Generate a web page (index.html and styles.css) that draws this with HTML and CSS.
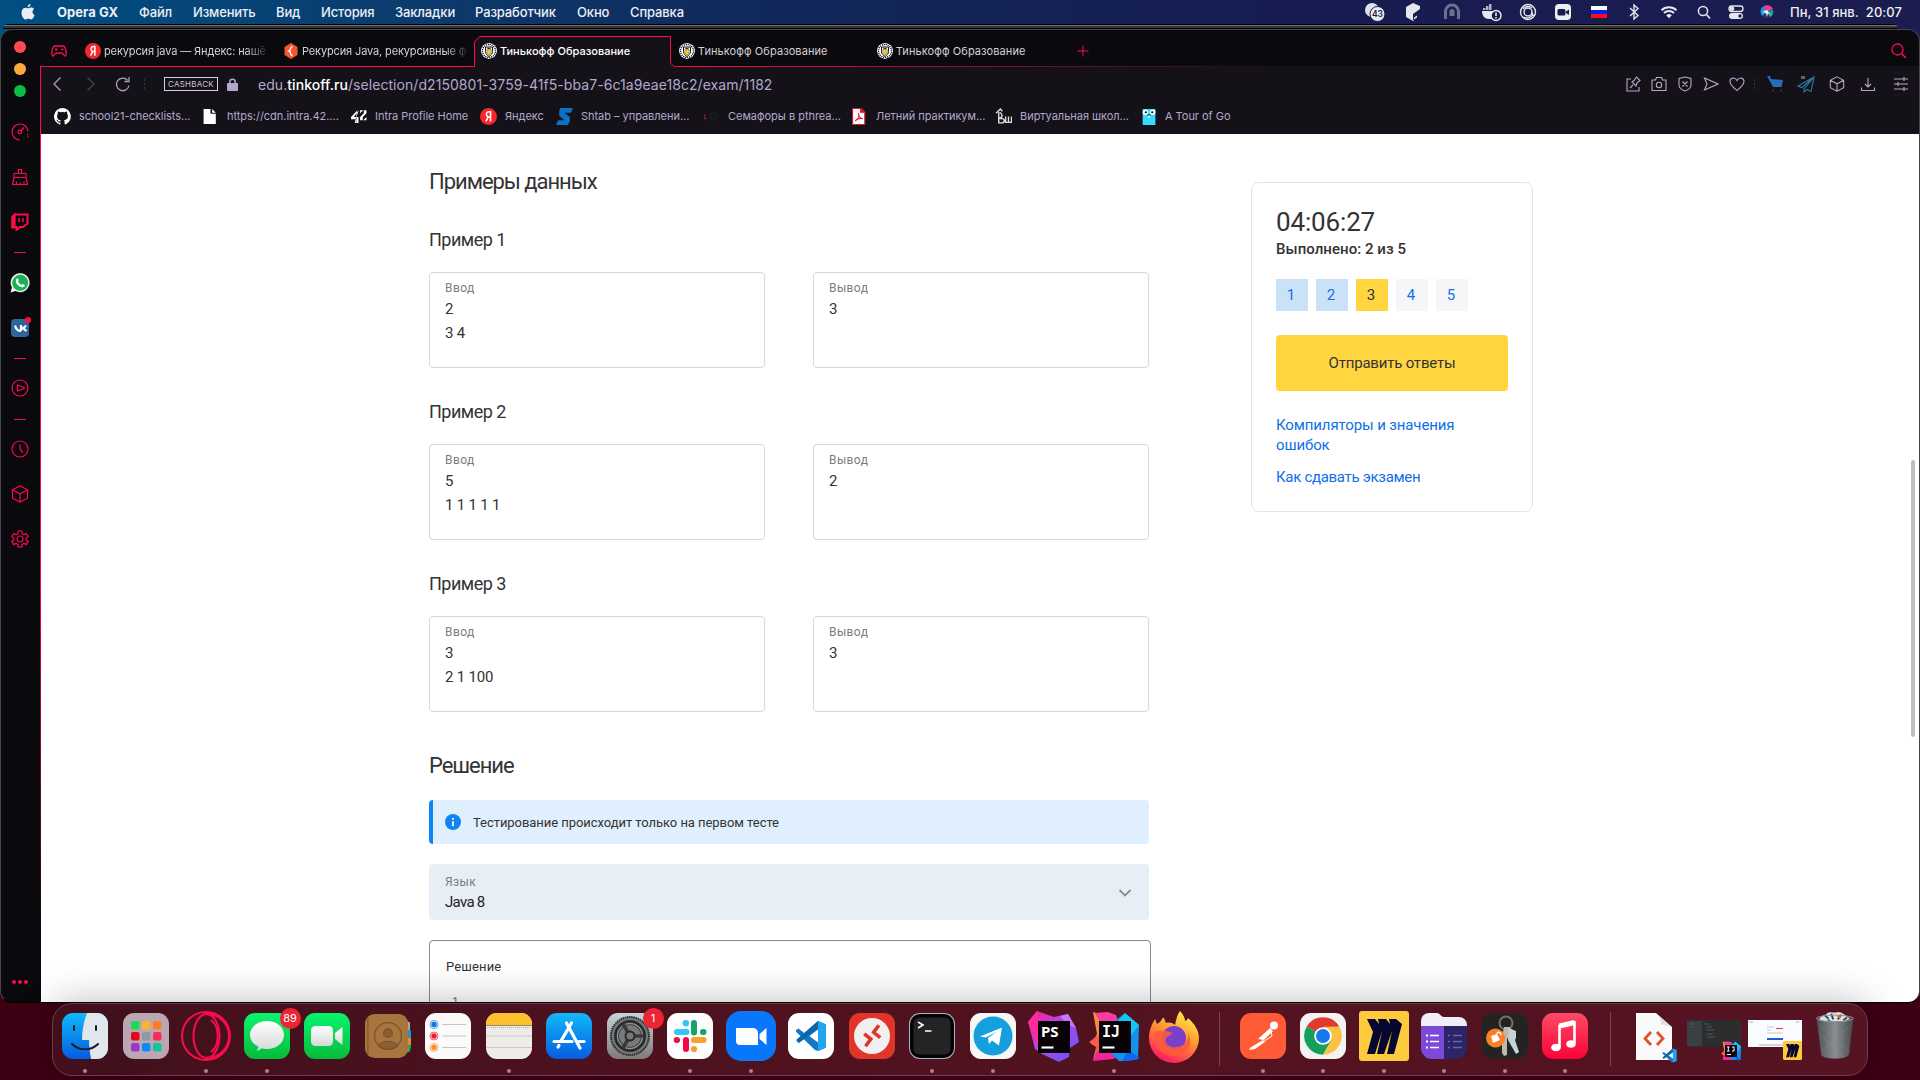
FILE: index.html
```html
<!DOCTYPE html>
<html lang="ru">
<head>
<meta charset="utf-8">
<title>Тинькофф Образование</title>
<link rel="stylesheet" href="styles.css">
</head>
<body>
<svg class="defs" width="0" height="0">
  <defs>
    <symbol id="crest" viewBox="0 0 16 16"><path d="M8 0l3 .8 2.500 1.400L15.500 5l.5 3-.8 3-2 3L8 16l-5.200-2L.8 11 0 8l.5-3 2-2.800L5 .8z" fill="#fff"/><path d="M8 1.500a6.500 6.500 0 100 13 6.500 6.500 0 000-13z" fill="none" stroke="#111" stroke-width="1.300" stroke-dasharray="1.200 .8"/><path d="M4.500 4h7v4.500c0 2.500-2 4-3.500 5-1.500-1-3.500-2.500-3.500-5z" fill="#fff" stroke="#111" stroke-width="1"/><path d="M5.800 6.500h4.400V9c0 1.600-1.200 2.600-2.200 3.400C7 11.600 5.800 10.600 5.800 9z" fill="#fbc926" stroke="#333" stroke-width=".4"/><path d="M5.800 4.800h4.400l-1 1.300H6.800z" fill="#333"/></symbol>
    <symbol id="ya" viewBox="0 0 16 16"><circle cx="8" cy="8" r="8" fill="#f8262c"/><path d="M9.900 12.700V3.600H8.500C6.900 3.600 6 4.500 6 5.900c0 1.200.6 1.900 1.700 2.600L5.500 12.700M9.900 8.600H8" fill="none" stroke="#fff" stroke-width="1.500"/></symbol>
    <symbol id="cube" viewBox="0 0 18 18"><path d="M9 1l7.500 3.800v8.400L9 17l-7.500-3.800V4.800zM1.500 4.800L9 8.800l7.500-4M9 8.800V17" fill="none" stroke="currentColor" stroke-width="1.200"/></symbol>
    <symbol id="vscode" viewBox="0 0 32 32"><path d="M23 1L9.500 13.200 3.600 8.600 1 9.900v1.800L20 30l3 1 8-3.500V4.500z" fill="#1479c4"/><path d="M23 1v30l8-3.500V4.500z" fill="#22a4ee"/><path d="M1 20l2.600 3.300L23 8.500V1z" fill="#0a66ad"/><path d="M23 9.500v13L14.300 16z" fill="#fff"/></symbol>
    <symbol id="miro" viewBox="0 0 50 50"><rect width="50" height="50" rx="3" fill="#fdc93d"/><path d="M8 8h8l4 5-1-5h8l4 5-1-5h7l6 5-8 30h-7l5-23-8 23h-7l5-23-7 23H8l6-22z" fill="#06062f"/></symbol>
    <linearGradient id="gBlue" x1="0" y1="0" x2="0" y2="1"><stop offset="0" stop-color="#10b9fb"/><stop offset="1" stop-color="#065ce0"/></linearGradient>
    <linearGradient id="gGreen" x1="0" y1="0" x2="0" y2="1"><stop offset="0" stop-color="#08f56f"/><stop offset="1" stop-color="#06bb3a"/></linearGradient>
    <linearGradient id="gWhite" x1="0" y1="0" x2="0" y2="1"><stop offset="0" stop-color="#fff"/><stop offset="1" stop-color="#d5d9d5"/></linearGradient>
    <linearGradient id="gGray" x1="0" y1="0" x2="0" y2="1"><stop offset="0" stop-color="#c6d4da"/><stop offset="1" stop-color="#7f7b79"/></linearGradient>
    <linearGradient id="gPs" x1="0" y1="0" x2="1" y2="1"><stop offset="0" stop-color="#ff188d"/><stop offset=".45" stop-color="#b349e8"/><stop offset="1" stop-color="#5b55fb"/></linearGradient>
    <linearGradient id="gFox" x1=".8" y1="0" x2=".3" y2="1"><stop offset="0" stop-color="#fff14f"/><stop offset=".45" stop-color="#ff9a2c"/><stop offset="1" stop-color="#ff1462"/></linearGradient>
    <linearGradient id="gMusic" x1="0" y1="0" x2="0" y2="1"><stop offset="0" stop-color="#fd4b66"/><stop offset="1" stop-color="#fa0436"/></linearGradient>
    <linearGradient id="gBin" x1="0" y1="0" x2="1" y2="0"><stop offset="0" stop-color="#4d5153"/><stop offset=".5" stop-color="#8a8e90"/><stop offset="1" stop-color="#44484a"/></linearGradient>
    <symbol id="idea" viewBox="0 0 50 50"><path d="M4 1l14 4 12 6-10 30L2 33l6-10z" fill="#fb8b34"/><path d="M6 2l13-1 8 3 8 26-15-2z" fill="#f93d9d"/><path d="M0 31l12-9 14 10-14 10-8 7 3-13z" fill="#fd5a4a"/><path d="M8 40l10-2 18 4-12 6-20 2z" fill="#f2249b"/><path d="M26 10l10-8 14 12-1 34-18 3-12-12z" fill="#1292ee"/><path d="M36 2l14 12-9 12-14-14z" fill="#14c5f2"/><path d="M33 51l6-12 11 7-1 2z" fill="#0a69f0"/></symbol>
  </defs>
</svg>

<header class="menubar">
  <svg class="apple" viewBox="0 0 14 16"><path d="M9.600 0c.1 1.600-1.300 3.200-2.900 3.200C6.500 1.700 8 .1 9.600 0zM7.300 4.300c.6 0 1.600-.8 3-.8 1.100 0 2.200.6 2.900 1.600-2.500 1.400-2.100 5 .4 6-.6 1.800-2 4.400-3.500 4.400-1 0-1.400-.7-2.700-.7s-1.800.7-2.700.7C2.700 15.500.5 12 .5 8.700c0-3.200 2-5 4-5 1.300 0 2.200.6 2.800.6z" fill="#e9eef3"/></svg>
  <nav class="menu"><b>Opera GX</b><span>Файл</span><span>Изменить</span><span>Вид</span><span>История</span><span>Закладки</span><span>Разработчик</span><span>Окно</span><span>Справка</span></nav>
  <div class="status">
    <svg viewBox="0 0 24 20"><circle cx="9" cy="8" r="7" fill="#dfe0ea"/><circle cx="14.500" cy="12" r="7.500" fill="#e9e9f0" stroke="#191b4a"/><text x="14.500" y="15.300" class="badge43">43</text></svg>
    <svg viewBox="0 0 24 20"><path d="M12 1l7 3v5l-3 2v5l-4 3-7-4V5z" fill="#e6e6ee"/><path d="M12 9l7-4v10l-4 3h-3z" fill="#191b4a"/><path d="M12 8l7-4v3l-7 5z" fill="#e6e6ee"/><path d="M13 15.500l3-2v2l-3 2z" fill="#e6e6ee"/></svg>
    <svg viewBox="0 0 24 20"><path d="M5.500 17V9.500a6.500 6.500 0 0113 0V17" fill="none" stroke="#6d6f90" stroke-width="3"/><path d="M9.500 14V9.500a2.500 2.500 0 015 0V14z" fill="#6d6f90"/></svg>
    <svg viewBox="0 0 24 20"><path d="M3 9h14c2-1 3 0 4 0-1 2-2 2-3 2-1 4-4 6-8 6s-7-3-7-8z" fill="#e6e6ee"/><path d="M4 7h9M7 5h6M10 3h3" stroke="#e6e6ee" stroke-width="1.600" stroke-dasharray="2.400 .5"/><circle cx="17" cy="13.500" r="5" fill="#191b4a" stroke="#e6e6ee" stroke-width="1.500"/><path d="M17 10.500v3.500m0 1v1.500" stroke="#e6e6ee" stroke-width="1.600"/></svg>
    <svg viewBox="0 0 24 20"><g fill="none" stroke="#e6e6ee" stroke-width="1.400"><circle cx="12" cy="10" r="7.500"/><circle cx="12" cy="10" r="4"/><path d="M7 7a6 6 0 019-1M17 12a6 6 0 01-9 3M16 10c0 3 1 4 3 3"/></g></svg>
    <svg viewBox="0 0 24 20"><rect x="4" y="2" width="16" height="16" rx="4" fill="#ededf3"/><rect x="6.500" y="7" width="8" height="6.500" rx="1.500" fill="#191b4a"/><path d="M15 9.500l3-2v5.500l-3-2z" fill="#191b4a"/></svg>
    <svg viewBox="0 0 24 20"><path d="M4 4h16v4H4z" fill="#fff"/><path d="M4 8h16v4H4z" fill="#0b1bf8"/><path d="M4 12h16v4H4z" fill="#f80f14"/></svg>
    <svg viewBox="0 0 24 20"><path d="M8 6l8 7.500-4 3.500V3l4 3.500L8 14" fill="none" stroke="#e6e6ee" stroke-width="1.400"/></svg>
    <svg viewBox="0 0 24 20"><path d="M4.500 8.200a11 11 0 0115 0M7 11a7.500 7.500 0 0110 0" fill="none" stroke="#e9e9f0" stroke-width="2"/><path d="M9.200 13.300a4.200 4.200 0 015.600 0L12 16.200z" fill="#e9e9f0"/></svg>
    <svg viewBox="0 0 24 20"><circle cx="11" cy="9" r="4.600" fill="none" stroke="#e6e6ee" stroke-width="1.500"/><path d="M14.500 12.500l3.500 4" stroke="#e6e6ee" stroke-width="1.700"/></svg>
    <svg viewBox="0 0 24 20"><rect x="5" y="4" width="14" height="5.500" rx="2.700" fill="none" stroke="#e6e6ee" stroke-width="1.300"/><circle cx="8" cy="6.700" r="2.300" fill="#e6e6ee"/><rect x="5" y="11" width="14" height="6" rx="3" fill="#e6e6ee"/><circle cx="16" cy="14" r="1.700" fill="#191b4a"/></svg>
    <svg viewBox="0 0 24 20"><circle cx="12" cy="10" r="6.500" fill="#2b2b63"/><path d="M12 10L7 14a6.500 6.500 0 012-10z" fill="#2897d6"/><path d="M12 10L9 4a6.500 6.500 0 019 3z" fill="#ef3c8e"/><path d="M12 10l6-2a6 6 0 01-3 7z" fill="#14a99b"/><path d="M7.500 10l4.500-2 4 5.500-3-2.500-1 4-1-4z" fill="#fff"/></svg>
    <span class="clock">Пн, 31 янв.&nbsp; 20:07</span>
  </div>
</header>
<div class="back-window"></div>

<main class="window">
  <aside class="sidebar">
    <div class="lights"><i class="close"></i><i class="min"></i><i class="max"></i></div>
    <div class="side-icons">
      <svg class="s1" viewBox="0 0 18 18"><path d="M9 17A8 8 0 1117 8.500" /><circle cx="8.800" cy="9" r="1.800"/><path d="M10 8l3-3.500M16.800 11v1.200m0 1v1.200"/></svg>
      <svg class="s2" viewBox="0 0 18 18"><path d="M7.500 5.500v-4h3v4M3 9.500v-4h12v4zM3 9.500L1.500 16.500h15L15 9.500M5.500 16.500v-3m4 3v-2m3.500 2v-3"/></svg>
      <svg class="s3" viewBox="0 0 18 18"><path d="M1 4l3-3v14H1z" fill="#ff0a49"/><path d="M4 1.500h12.500v9L12 14H9l-3.500 3v-3H1.500V4z" stroke-width="2"/><path d="M8 5v4m4-4v4" stroke-width="1.500"/></svg>
      <hr>
      <svg class="s4" viewBox="0 0 20 20"><path d="M.5 19.500l1.400-5A9.500 9.500 0 115.500 18z" fill="#eee" stroke="none"/><circle cx="10.200" cy="9.800" r="8" fill="#17b254" stroke="none"/><path d="M6.500 6c.8-1.200 1.500-.8 2 .8.4 1 .2 1-.5 1.800 1 2 2 2.700 3.500 3.400.8-1 1-1.200 1.700-.8 1.800.8 1.900 1 1.300 2-1 1.400-3 1.300-5.500-.2C6.300 11.300 5 8.500 6.500 6z" fill="#fff" stroke="none"/></svg>
      <svg class="s5" viewBox="0 0 20 20"><rect y="2" width="18" height="18" rx="4" fill="#2d6798" stroke="none"/><path d="M4 8.500c1 4 3 5.500 6 5.500m0-6v6m5-5.500c-1 1.500-2 2.500-4 2.700 2 .3 3 1.300 4.300 3" stroke="#fff" stroke-width="2.200"/><circle cx="17" cy="3" r="3" fill="#ff0a49" stroke="none"/></svg>
      <hr>
      <svg class="s6" viewBox="0 0 18 18"><circle cx="9" cy="9" r="8"/><path d="M6.500 6v6l6.500-2.500v-1z"/></svg>
      <hr>
      <svg class="s7" viewBox="0 0 18 18"><circle cx="9" cy="9" r="8"/><path d="M9 4.500V9l3 3.500"/></svg>
      <svg class="s8" viewBox="0 0 18 18"><use href="#cube"/></svg>
      <svg class="s9" viewBox="0 0 18 18"><path d="M7 1h4v2.500l2 1.200 2.200-1.200 2 3.300L15 8v2l2.200 1.300-2 3.300-2.200-1.200-2 1.200V17H7v-2.400l-2-1.200-2.200 1.200-2-3.300L3 10V8L.8 6.800l2-3.300L5 4.700l2-1.200z"/><circle cx="9" cy="9" r="3"/></svg>
    </div>
    <div class="more"><i></i><i></i><i></i></div>
  </aside>

  <section class="browser">
    <div class="tabs">
      <svg class="gx" viewBox="0 0 16 12"><path d="M4 1h8c2 0 2.500 2 3 5s0 5-1 5-2-3-3.500-3h-5C4 8 3 11 2 11S.5 9 1 6s1-5 3-5zM4 4.500h2.500M5.200 3.200v2.600M10 4.500h2.500" fill="none" stroke="#f5124e" stroke-width="1.300"/></svg>
      <div class="tab long"><svg><use href="#ya"/></svg><span>рекурсия java — Яндекс: нашё</span></div>
      <div class="tab long"><svg viewBox="0 0 16 16"><path d="M8 0l6.500 4v8L8 16l-6.500-4V4z" fill="#f5552f"/><path d="M9.500 3.500C6.500 4 8.500 7 6 8c2.500 1 .5 4 3.500 4.500" fill="none" stroke="#fff" stroke-width="1.500"/></svg><span>Рекурсия Java, рекурсивные ф</span></div>
      <div class="tab active"><svg class="outline" viewBox="0 0 200 31"><path d="M.5 31V6L5.500.5H196.500V27l3.500 3.500V31z" fill="#141218"/><path d="M.5 31V6L5.500.5H196.500V27l3.500 3.500" fill="none" stroke="#ff0a49"/></svg><svg><use href="#crest"/></svg><span>Тинькофф Образование</span></div>
      <div class="tab"><svg><use href="#crest"/></svg><span>Тинькофф Образование</span></div>
      <div class="tab"><svg><use href="#crest"/></svg><span>Тинькофф Образование</span></div>
      <svg class="plus" viewBox="0 0 12 12"><path d="M6 .5v11M.5 6h11" stroke="#f50c48"/></svg>
      <svg class="find" viewBox="0 0 16 16"><circle cx="6.500" cy="6.500" r="5.500" fill="none" stroke="#ff0a49" stroke-width="1.300"/><path d="M10.500 10.500L15 15" stroke="#ff0a49" stroke-width="1.500"/></svg>
    </div>

    <div class="chrome">
      <div class="address">
        <svg class="nav" viewBox="0 0 16 16"><path d="M10.500 1.500L4 8l6.500 6.500" fill="none" stroke="#a79db8" stroke-width="1.300"/></svg>
        <svg class="nav fwd" viewBox="0 0 16 16"><path d="M5.500 1.500L12 8l-6.500 6.500" fill="none" stroke="#47434f" stroke-width="1.300"/></svg>
        <svg class="nav rel" viewBox="0 0 16 16"><path d="M14 9.500a6.300 6.300 0 11-1.500-5.300M14 1v4.500H9.500" fill="none" stroke="#a79db8" stroke-width="1.300"/></svg>
        <i class="dots"></i>
        <span class="cashback">CASHBACK</span>
        <svg class="lock" viewBox="0 0 11 13"><path d="M2.800 6V4a2.700 2.700 0 015.400 0v2" fill="none" stroke="#b3a8cb" stroke-width="1.500"/><rect y="5" width="11" height="8" rx="1" fill="#b3a8cb"/></svg>
        <span class="url">edu.<b>tinkoff.ru</b>/selection/d2150801-3759-41f5-bba7-6c1a9eae18c2/exam/1182</span>
        <div class="tools">
          <svg viewBox="0 0 16 16"><path d="M6 3H2v12h12v-4M5 12l3-3M7 6l4 4 1-3 3-2.500L11.500 1 9 4.500z"/></svg>
          <svg viewBox="0 0 16 16"><path d="M1 4h3.500l1-2.500h5L11.500 4H15v10.500H1z"/><circle cx="8" cy="9" r="2.700"/></svg>
          <svg viewBox="0 0 16 16"><path d="M8 1l6 1.500V9c0 3-3 5-6 6-3-1-6-3-6-6V2.500zM5.500 5.500l5 5m0-5l-5 5"/></svg>
          <svg viewBox="0 0 16 16"><path d="M1.500 2L15 8 1.500 14 4 8z"/></svg>
          <svg viewBox="0 0 16 16"><path d="M8 14.500C5 12 1 9 1 5.500 1 1.500 6 .8 8 4.500 10 .8 15 1.500 15 5.500c0 3.500-4 6.500-7 9z"/></svg>
          <i class="dots"></i>
          <svg class="cart" viewBox="0 0 16 18"><path d="M0 1h3l1 3 12 1-1.500 7H6z" fill="#286bb7" stroke="none"/><path d="M5 15.500h2m6 0h2" stroke="#33303a" stroke-width="2"/></svg>
          <svg class="plane" viewBox="0 0 18 18"><path d="M17 2L1 11l4 1.500L17 2 7 14v3l3-2.500 4 2z" stroke="#287d9c"/><path d="M5 4V2h2v2" stroke="#666" stroke-width="2"/></svg>
          <svg class="box" viewBox="0 0 18 18"><use href="#cube"/></svg>
          <svg class="down" viewBox="0 0 16 16"><path d="M8 2v9M5 8l3 3 3-3M1.500 11.500v3h13v-3"/></svg>
          <svg class="sliders" viewBox="0 0 16 16"><path d="M1 3h14M1 8h14M1 13h14M11 1v4M5 6v4m6 1v4"/></svg>
        </div>
      </div>
      <div class="bookmarks">
        <div><svg viewBox="0 0 16 16"><path d="M8 0a8 8 0 00-2.500 15.600c.4 0 .5-.2.5-.4v-1.500c-2.200.5-2.700-.9-2.700-.9-.4-.9-.9-1.200-.9-1.200-.7-.5.1-.5.100-.5.800.100 1.200.8 1.200.8.700 1.200 1.900.9 2.300.7.100-.5.300-.9.500-1.100-1.800-.2-3.600-.9-3.600-4 0-.9.300-1.600.8-2.100-.1-.2-.4-1 .1-2.100 0 0 .7-.2 2.200.8a7.500 7.500 0 014 0c1.500-1 2.200-.8 2.200-.8.4 1.100.200 1.900.100 2.100.5.600.8 1.300.8 2.100 0 3.100-1.900 3.700-3.700 3.900.3.300.6.800.6 1.500v2.200c0 .2.100.5.600.4A8 8 0 008 0z" fill="#fff"/></svg>school21-checklists...</div>
        <div><svg viewBox="0 0 16 16"><path d="M1.500 1h6.500v4.500H13V15H1.500z" fill="#fff"/><path d="M9.500 1L13 4.500H9.500z" fill="#fff"/></svg>https://cdn.intra.42....</div>
        <div><svg viewBox="0 0 16 16"><path d="M7 2L1 8.500v2h5V14H4.500M6 8.500H3.500L8.500 2zM9.500 2v3l3-3zM15.500 2v3l-3.500 3.500v3h-2.500v-3L13 5V2zM15.500 8.500v3h-3z" fill="#fff"/><path d="M6 8.500h2V14H6z" fill="#fff"/></svg>Intra Profile Home</div>
        <div><svg><use href="#ya"/></svg>Яндекс</div>
        <div><svg viewBox="0 0 16 16"><path d="M4 0h12l-2 4.500H8l5 4V13l-2 3H0l2-4.500h6l-5-4V3z" fill="#0b71c7"/></svg>Shtab – управлени...</div>
        <div><svg viewBox="0 0 16 16"><path d="M1.500 6v4h2" fill="none" stroke="#8e2323"/><circle cx="10" cy="8" r="3" fill="none" stroke="#1d1b22" stroke-width="2"/></svg>Семафоры в pthrea...</div>
        <div><svg viewBox="0 0 16 16"><path d="M1.500.500h8L13 4v11.500H1.500z" fill="#fff" stroke="#d9122a"/><path d="M9 .5V4h4" fill="#d9122a" stroke="#d9122a"/><path d="M4 12c3-2 4-5 3-7 0 3 2 5 4 5-3-.5-5 0-7 2z" fill="none" stroke="#d9122a"/></svg>Летний практикум...</div>
        <div><svg viewBox="0 0 16 16"><path d="M3.500 4v10h3c3 0 3-4 0-4h-3c4-1 4-4 1-6M1 5l4-4 2 2M10 8v5.500h5.500V8M12.700 8v5.500" fill="none" stroke="#ddd" stroke-width="1.300"/></svg>Виртуальная школ...</div>
        <div><svg viewBox="0 0 16 16"><path d="M2.500 1h12v15h-12z" fill="#38dbfb"/><circle cx="5" cy="4" r="2.500" fill="#fff"/><circle cx="12" cy="4" r="2.500" fill="#fff"/><circle cx="5.500" cy="4" r="1"/><circle cx="11.500" cy="4" r="1"/><path d="M7.500 7h2v2h-2z" fill="#fff"/><path d="M7 6h3v1H7z" fill="#222"/></svg>A Tour of Go</div>
      </div>

      <div class="page">
        <article class="task">
          <h2>Примеры данных</h2>
          <section class="example"><h3>Пример 1</h3><div class="io"><div class="field"><label>Ввод</label><p>2</p><p>3 4</p></div><div class="field"><label>Вывод</label><p>3</p></div></div></section>
          <section class="example"><h3>Пример 2</h3><div class="io"><div class="field"><label>Ввод</label><p>5</p><p>1 1 1 1 1</p></div><div class="field"><label>Вывод</label><p>2</p></div></div></section>
          <section class="example"><h3>Пример 3</h3><div class="io"><div class="field"><label>Ввод</label><p>3</p><p>2 1 100</p></div><div class="field"><label>Вывод</label><p>3</p></div></div></section>
          <h2 class="solution">Решение</h2>
          <div class="alert"><svg viewBox="0 0 16 16"><circle cx="8" cy="8" r="8" fill="#0d85f5"/><path d="M8 4v1.800M8 7.200v5" stroke="#fff" stroke-width="1.800"/></svg>Тестирование происходит только на первом тесте</div>
          <div class="select"><div><label>Язык</label><p>Java 8</p></div><svg viewBox="0 0 14 8"><path d="M1.500 1L7 6.500 12.500 1" fill="none" stroke="#8a8f94" stroke-width="1.800"/></svg></div>
          <div class="code"><label>Решение</label><span>1</span></div>
        </article>
        <aside class="card">
          <div class="timer">04:06:27</div>
          <div class="done">Выполнено: 2 из 5</div>
          <div class="steps"><a class="ok">1</a><a class="ok">2</a><a class="now">3</a><a>4</a><a>5</a></div>
          <button>Отправить ответы</button>
          <a class="link first">Компиляторы и значения<br>ошибок</a>
          <a class="link">Как сдавать экзамен</a>
        </aside>
        <i class="scroll"></i>
      </div>
    </div>
  </section>
</main>

<footer class="dock">
  <div class="app run"><svg viewBox="0 0 46 46"><rect width="46" height="46" rx="11" fill="url(#gBlue)"/><path d="M25 0h10a11 11 0 0111 11v24a11 11 0 01-11 11h-6c-1-6-2-13-2-19h-7C20 17 22 8 25 0z" fill="#dfe6ec"/><path d="M12 13v4M34 13v4M10 31c7 7 19 7 26 0" fill="none" stroke="#15202b" stroke-width="2" stroke-linecap="round"/></svg></div>
  <div class="app"><svg viewBox="0 0 46 46"><rect width="46" height="46" rx="11" fill="#bba7b1"/><g><rect x="8" y="8" width="8.500" height="8.500" rx="2" fill="#1bdc4e"/><rect x="19" y="8" width="8.500" height="8.500" rx="2" fill="#fcb22b"/><rect x="30" y="8" width="8.500" height="8.500" rx="2" fill="#fb7e27"/><rect x="8" y="19" width="8.500" height="8.500" rx="2" fill="#e5081d"/><rect x="19" y="19" width="8.500" height="8.500" rx="2" fill="#8f9a9e"/><rect x="30" y="19" width="8.500" height="8.500" rx="2" fill="#fb2c55"/><rect x="8" y="30" width="8.500" height="8.500" rx="2" fill="#9a38cc"/><rect x="19" y="30" width="8.500" height="8.500" rx="2" fill="#0b8bfb"/><rect x="30" y="30" width="8.500" height="8.500" rx="2" fill="#12c59b"/></g></svg></div>
  <div class="app run big"><svg viewBox="0 0 50 50"><g fill="none" stroke="#fb0b4a" stroke-width="2"><circle cx="25" cy="25" r="24"/><ellipse cx="25.500" cy="25" rx="13" ry="22"/><path d="M26 3a22 22 0 010 44"/><path d="M30 9c9 7 9 25 0 32"/></g></svg></div>
  <div class="app run"><svg viewBox="0 0 46 46"><rect width="46" height="46" rx="11" fill="url(#gGreen)"/><path d="M23 8c9.500 0 17 6 17 14s-7.500 14-17 14c-2 0-4-.3-5.500-.8-1.500 1.500-3 2.300-5 2.500 1-1.300 1.700-2.500 1.800-4.200C9 31 6 27 6 22 6 14 13.500 8 23 8z" fill="url(#gWhite)"/></svg><em>89</em></div>
  <div class="app"><svg viewBox="0 0 46 46"><rect width="46" height="46" rx="11" fill="url(#gGreen)"/><rect x="7" y="13" width="22" height="20" rx="4.500" fill="url(#gWhite)"/><path d="M31 20l7.500-6v18L31 26z" fill="url(#gWhite)"/></svg></div>
  <div class="app"><svg viewBox="0 0 48 46"><path d="M42 6l5 3v8h-5z" fill="#aaa"/><path d="M42 17h6v8h-6z" fill="#2097d4"/><path d="M42 25h6v8h-6z" fill="#ef8a2c"/><path d="M42 33h6l-1 6-5 2z" fill="#20b45c"/><rect width="45" height="46" rx="10" fill="#a9753f"/><path d="M3 4v38" stroke="#8a5b2d" stroke-width="1.500"/><g stroke="#7c5128" fill="none" stroke-width="1.200"><circle cx="24" cy="23" r="14"/><circle cx="24" cy="20" r="4.500" fill="#8a5f34"/><path d="M14 33c3-6 17-6 20 0-5 5-15 5-20 0z" fill="#8a5f34"/></g></svg></div>
  <div class="app"><svg viewBox="0 0 46 46"><rect width="46" height="46" rx="11" fill="#fbfaf9"/><path d="M17 11.500h24M17 23h24M17 34.500h24" stroke="#c5c5c5"/><g stroke-width=".7"><circle cx="9" cy="11.500" r="2.700" fill="#0b78e6"/><circle cx="9" cy="23" r="2.700" fill="#ee1c2e"/><circle cx="9" cy="34.500" r="2.700" fill="#fb8b2e"/><circle cx="9" cy="11.500" r="4" fill="none" stroke="#0b78e6"/><circle cx="9" cy="23" r="4" fill="none" stroke="#ee1c2e"/><circle cx="9" cy="34.500" r="4" fill="none" stroke="#fb8b2e"/></g></svg></div>
  <div class="app run"><svg viewBox="0 0 46 46"><rect width="46" height="46" rx="11" fill="#eeebe8"/><path d="M0 12V11A11 11 0 0111 0h24a11 11 0 0111 11v1z" fill="#fcc02f"/><path d="M0 12.500h46" stroke="#9c8c60"/><path d="M0 23h46M0 34.500h46" stroke="#cfcac6"/><path d="M1 14.500h44" stroke="#aaa" stroke-dasharray="1 1"/></svg></div>
  <div class="app"><svg viewBox="0 0 46 46"><rect width="46" height="46" rx="11" fill="url(#gBlue)"/><g fill="none" stroke="#fff" stroke-width="3.200" stroke-linecap="round"><path d="M25.500 10L15 28M20.500 10L34 35M12 34l1-1.500M8 28.500h18M33 28.500h5"/></g></svg></div>
  <div class="app"><svg viewBox="0 0 46 46"><rect width="46" height="46" rx="11" fill="url(#gGray)"/><circle cx="23" cy="23" r="19" fill="#77797a" stroke="#2b2b2c" stroke-width="2" stroke-dasharray="1.500 .7"/><circle cx="23" cy="23" r="13.500" fill="none" stroke="#2b2b2c" stroke-width="5"/><circle cx="23" cy="23" r="12.500" fill="none" stroke="#8e9091" stroke-width="1.500"/><path d="M23 23h14M23 23l-7-12M23 23l-7 12" stroke="#3a3a3b" stroke-width="3.500"/><circle cx="23" cy="23" r="4.500" fill="#777" stroke="#2b2b2c" stroke-width="2"/></svg><em>1</em></div>
  <div class="app run"><svg viewBox="0 0 46 46"><rect width="46" height="46" rx="11" fill="#fdfdfd"/><g fill="none" stroke-width="6" stroke-linecap="round"><path d="M19 10v.500M19 10h-.5M10 19h9.500" stroke="#36c5f0"/><path d="M27 10v9.500M36 19h.5" stroke="#14a36c"/><path d="M19 27v9M10 27h-.300" stroke="#f4084c"/><path d="M27 27h9.500M27 36v.300" stroke="#f9a02b"/></g></svg></div>
  <div class="app run big"><svg viewBox="0 0 50 50"><rect width="50" height="50" rx="15" fill="#0877fb"/><path d="M10 17h17a5 5 0 015 5v12H14a4 4 0 01-4-4zM33.500 23l7-6v17l-7-6z" fill="#fff"/></svg></div>
  <div class="app"><svg viewBox="0 0 46 46"><rect width="46" height="46" rx="11" fill="#fff"/><use href="#vscode" x="7" y="7" width="32" height="32"/></svg></div>
  <div class="app"><svg viewBox="0 0 46 46"><rect width="46" height="46" rx="11" fill="#e1352a"/><circle cx="23" cy="23" r="18" fill="#f1f0f0"/><path d="M15.500 20l6 6-6 6.500M31 13l-6 6.500 6 6" transform="rotate(-6 23 23)" fill="none" stroke="#e1352a" stroke-width="3.600"/></svg></div>
  <div class="app run"><svg viewBox="0 0 46 46"><rect width="46" height="46" rx="11" fill="#a4b5bd"/><rect x="1" y="1" width="44" height="44" rx="10" fill="#050505"/><rect x="4.500" y="4.500" width="37" height="37" rx="6" fill="#242424"/><path d="M9 9l5 3-5 3M16 18h6.500" fill="none" stroke="#fff" stroke-width="1.600"/></svg></div>
  <div class="app run"><svg viewBox="0 0 46 46"><rect width="46" height="46" rx="11" fill="#f7f7f7"/><circle cx="23" cy="23" r="19.500" fill="#14a0dc"/><path d="M10 23.500L32 14.500 29 32.500l-7-5-3 3.500-1-6 9-6.500-11 6z" fill="#fff"/></svg></div>
  <div class="app big"><svg viewBox="0 0 50 50"><path d="M0 11L9 0l17 6 14-3 8 14 3 14-9 6-1 9-10 5-17-8-7-5-2-8z" fill="url(#gPs)"/><path d="M0 11L9 0l5 14-4 22z" fill="#ff2a9c"/><path d="M32 5l8-2 8 14-9-4z" fill="#c478fb"/><rect x="10" y="10" width="32" height="32" fill="#080309"/><text x="13" y="26" class="jb">PS</text><path d="M13.500 36.500h12" stroke="#fff" stroke-width="2.200"/></svg></div>
  <div class="app run big"><svg viewBox="0 0 50 50"><use href="#idea"/><rect x="10" y="10" width="32" height="32" fill="#080309"/><text x="13" y="26" class="jb ij">IJ</text><path d="M13.500 36.500h12" stroke="#fff" stroke-width="2.200"/></svg></div>
  <div class="app big"><svg viewBox="0 0 50 50"><path d="M31 0c3 3 5 7 5 10 3-1 3-3 3-3 7 6 11 13 11 20A25 25 0 010 27C0 19 3 13 6 8l2 5 3-2c2-2 2-5 4-4l2 5c4-1 7 0 9 2 1-5 2-10 5-14z" fill="url(#gFox)"/><circle cx="25" cy="27" r="12" fill="#7a3fcb"/><path d="M6 20c5-1 8 1 12 0l6 2-7 5c-2 5 3 10 10 9 7 0 13-5 12-14 6 12-1 23-13 23S5 37 6 20z" fill="#ff5b3a" opacity=".85"/></svg></div>
  <i class="sep"></i>
  <div class="app run"><svg viewBox="0 0 46 46"><rect width="46" height="46" rx="11" fill="#ff5a36"/><circle cx="34" cy="12.500" r="4" fill="#fff"/><path d="M30 15l3 3-9 9-6-1zM23 27l2 2-10 7-6 1 1.500-2.500z" fill="#fff"/><path d="M31 18l1 5-9 6" fill="none" stroke="#fff"/></svg></div>
  <div class="app run"><svg viewBox="0 0 46 46"><rect width="46" height="46" rx="11" fill="#f3f3f3"/><path d="M23 23L6.800 13.600A18.700 18.700 0 0139.200 13.600z" fill="#e13b30"/><path d="M23 23L6.800 13.600A18.700 18.700 0 0023 41.700l8-14z" fill="#12a05a"/><path d="M23 23l16.200-9.400A18.700 18.700 0 0123 41.700l8-14z" fill="#fbc142"/><path d="M23 13.600h16.200L31 23z" fill="#fbc142"/><path d="M6.800 13.600h32.400L23 14z" fill="#e13b30"/><circle cx="23" cy="23" r="8.800" fill="#fff"/><circle cx="23" cy="23" r="7" fill="#1a79ea"/></svg></div>
  <div class="app run big"><svg><use href="#miro"/></svg></div>
  <div class="app run"><svg viewBox="0 0 46 46"><path d="M0 13V8a8 8 0 018-8h8c3 0 4 4 7 4h15a8 8 0 018 8v5H0z" fill="#efedf5"/><path d="M0 13h23v33H11A11 11 0 010 35z" fill="#7d49d8"/><path d="M23 13h23v22a11 11 0 01-11 11H23z" fill="#2b2467"/><path d="M9 22.500h9M9 28.500h9M9 34.500h9" stroke="#fff" stroke-width="1.500"/><path d="M5 22.500h2m-2 6h2m-2 6h2" stroke="#fff" stroke-width="2"/><path d="M27 22.500h2m3 0h9M27 28.500h2m3 0h9M27 34.500h2m3 0h9" stroke="#6a63a6" stroke-width="1.300"/></svg></div>
  <div class="app run"><svg viewBox="0 0 46 46"><rect width="46" height="46" rx="11" fill="#232323"/><circle cx="24" cy="10" r="6.500" fill="none" stroke="#777266" stroke-width="2"/><path d="M22 14l6 0 2 8-5 4v16l-3 1-2-3V24z" fill="#b9b9ae"/><path d="M27 15l7 3v7l-1 2 4 12-3 2-8-14z" fill="#c6d3d4"/><circle cx="13.500" cy="25" r="9.500" fill="#fa7f25"/><path d="M9 23l6-2 3 6-7 3z" fill="#fff"/><path d="M15 21c0-3 4-2 4 1" fill="none" stroke="#fff" stroke-width="1.500"/></svg></div>
  <div class="app run"><svg viewBox="0 0 46 46"><rect width="46" height="46" rx="11" fill="url(#gMusic)"/><path d="M17.500 34V13l15-3.500V30" fill="none" stroke="#fff" stroke-width="2.600"/><path d="M17.500 13l15-3.500" stroke="#fff" stroke-width="5"/><ellipse cx="14" cy="34.500" rx="4.800" ry="3.800" fill="#fff"/><ellipse cx="29" cy="31" rx="4.800" ry="3.800" fill="#fff"/></svg></div>
  <i class="sep"></i>
  <div class="app big"><svg viewBox="0 0 50 50"><path d="M7 2h20l16 14v33H7z" fill="#fafafa"/><path d="M27 2l16 15c-4-4-10-2-11-4 0-4-1-8-5-11z" fill="#ddd"/><path d="M22 21l-6 6.500 6 6.500M28 21l6 6.500-6 6.500" fill="none" stroke="#d9562b" stroke-width="2.800"/><use href="#vscode" x="33" y="37" width="15" height="15"/></svg></div>
  <div class="app thumb"><svg viewBox="0 0 54 40"><rect width="54" height="27" fill="#2d2d2e"/><path d="M0 1h15v25H0z" fill="#3a3f43"/><path d="M2 4h5M3 7h3M17 4h6M19 7h6M19 10h8M19 14h7M20 17h8" stroke="#596066" stroke-width=".8"/><use href="#idea" x="34" y="21" width="20" height="20"/><rect x="38" y="25" width="12" height="12" fill="#0b0510"/><path d="M40 27h2.500m-1.200 0v4M40 31h2.500M45 27h2v4h-2M40 34.500h4" fill="none" stroke="#fff"/></svg></div>
  <div class="app thumb"><svg viewBox="0 0 54 40"><rect width="54" height="27" fill="#fafbfe"/><path d="M19 18h16v2H19z" fill="#2359dd"/><path d="M19 7h7M19 10h4M19 13h16" stroke="#bbc" stroke-width=".8"/><path d="M28 8.500h7" stroke="#d63c3c"/><path d="M1 2h4M11 25h30M48 2h3" stroke="#99a" stroke-width=".8"/><use href="#miro" x="35" y="21" width="19" height="19"/></svg></div>
  <div class="app big"><svg viewBox="0 0 50 54"><path d="M5 7h40l-5 40c-1 6-29 6-30 0z" fill="url(#gBin)"/><path d="M8 9c3-6 7-3 9-7 4-2 7 1 11-1 5 0 8 4 13 7l-5 3H13z" fill="#dfe2e3"/><path d="M14 5l4 3M21 3l2 6M32 4l-4 5M38 7l-4 3" stroke="#37414c" stroke-width="2"/><path d="M28 5l3 2" stroke="#d9682f" stroke-width="3"/><path d="M17 9l3 2" stroke="#2a8f7c" stroke-width="2"/><ellipse cx="25" cy="8" rx="20" ry="3.500" fill="none" stroke="#8b9092"/><path d="M8 15l34 30M42 15L10 44M8 24l25 25" stroke="#999d9f" stroke-width=".6" opacity=".5"/></svg></div>
</footer>
</body>
</html>
```
FILE: styles.css
```css
* { box-sizing: border-box; }
body { margin: 0; width: 1920px; height: 1080px; overflow: hidden; display: flex; flex-direction: column; font-family: Inter, "Noto Sans", sans-serif; background: linear-gradient(90deg, #004f83 0, #0b3c6e 400px, #11285a 760px, #171c50 1300px, #1b1d4e 100%) top / 100% 60px no-repeat, linear-gradient(90deg, #3c0013, #46041a 50%, #3c0013); }
.defs { position: absolute; }
h2, h3, p { margin: 0; font-weight: 400; }
i { font-style: normal; }

.menubar { flex: none; height: 24px; display: flex; align-items: center; color: #eceff4; font-size: 13px; font-weight: 500; white-space: nowrap; }
.apple { width: 14px; height: 16px; margin-left: 21px; }
.menu { margin-left: 22px; display: grid; grid-template-columns: 82px 54px 83px 45px 74px 80px 102px 53px 60px; letter-spacing: -.13px; }
.menu b { letter-spacing: .05px; }
.status { margin-left: auto; display: flex; align-items: center; padding-right: 18px; }
.status svg { width: 24px; height: 20px; margin-right: 10.700px; }
.status svg:nth-of-type(2) { margin-right: 15px; }
.status svg:nth-of-type(1) { margin-right: 13.500px; }
.status svg:nth-of-type(3) { margin-right: 15px; }
.status svg:nth-of-type(4) { margin-right: 13px; }
.status svg:nth-of-type(5) { margin-right: 11.500px; }
.status svg:nth-of-type(6), .status svg:nth-of-type(7) { margin-right: 11.500px; }
.status svg:nth-of-type(10) { margin-right: 8px; }
.status svg:nth-of-type(11) { margin-right: 7px; }
.status svg:nth-of-type(12) { margin-right: 11.500px; }
.badge43 { font: 600 8.500px Inter, sans-serif; fill: #191b4a; text-anchor: middle; }
.clock { letter-spacing: .05px; }

.back-window { flex: none; height: 5px; margin: 0 22px 0 3px; border-radius: 8px 8px 0 0; background: linear-gradient(#000 1px, #707176 1px 2px, #36363a 2px 4px, #000 4px); }
.window { flex: none; height: 974px; display: flex; background: #0a090e; border: 1px solid #45454a; border-bottom-color: #000; border-radius: 12px; overflow: hidden; }
.sidebar { width: 39px; flex: none; display: flex; flex-direction: column; align-items: center; padding-right: 2px; }
.lights { display: grid; gap: 10px; margin-top: 11px; }
.lights i { width: 12px; height: 12px; border-radius: 50%; }
.close { background: #fe4b51; }
.min { background: #fdaa3c; }
.max { background: #08bf45; }
.side-icons { display: flex; flex-direction: column; align-items: center; margin-top: 26px; color: #ff0a49; }
.side-icons svg { width: 18px; height: 18px; fill: none; stroke: #ff0a49; stroke-width: 1.200; margin-bottom: 27px; }
.side-icons hr { width: 12px; height: 1px; border: 0; background: #ff0a49; margin: 0; }
.side-icons .s3 { margin-bottom: 21px; }
.side-icons .s4, .side-icons .s5 { width: 20px; height: 20px; }
.side-icons .s4 { margin: 20px 0 24px; }
.side-icons .s5 { margin-left: 2px; margin-bottom: 21px; }
.side-icons .s6 { margin: 20px 0 22px; }
.side-icons .s7 { margin-top: 20px; }
.more { margin: auto 0 18px; display: flex; gap: 2px; }
.more i { width: 4px; height: 4px; border-radius: 50%; background: #ff0a49; }

.browser { flex: 1; display: flex; flex-direction: column; min-width: 0; }
.tabs { flex: none; height: 36px; display: flex; align-items: flex-end; padding-left: 11px; }
.gx { width: 16px; height: 12px; margin: 0 10px 9px 0; }
.tab { position: relative; height: 30px; width: 197.950px; padding: 0 8px 0 8px; display: flex; align-items: center; gap: 3px; font-size: 11px; letter-spacing: .09px; color: #d3d2d6; white-space: nowrap; }
.tab svg { width: 16px; height: 16px; flex: none; }
.tab span { position: relative; }
.long span { letter-spacing: -.13px; mask-image: linear-gradient(90deg, #000 88%, rgba(0, 0, 0, .15)); }
.active { color: #fff; z-index: 1; letter-spacing: .02px; }
.active svg { position: relative; }
.active span { font-weight: 500; }
.tab .outline { position: absolute; left: 1px; top: 0; width: 200px; height: 31px; }
.plus { width: 12px; height: 12px; margin: 0 0 9px 10px; }
.find { width: 16px; height: 16px; margin: 0 12px 7px auto; }

.chrome { flex: 1; display: flex; flex-direction: column; min-height: 0; background: linear-gradient(90deg, #ff0a49 630px, transparent 1240px) top / 100% 1px no-repeat, linear-gradient(#ff0a49 500px, #0a090e 880px) left / 1px 100% no-repeat, #141218; padding: 1px 0 0 1px; }
.address { flex: none; height: 34px; display: flex; align-items: center; padding-left: 9px; }
.nav { width: 16px; height: 16px; }
.fwd { margin-left: 16px; }
.rel { margin-left: 17px; }
.dots { width: 1px; height: 11px; margin-left: 13px; background: repeating-linear-gradient(#3b3844 0 2px, transparent 2px 4px); }
.cashback { margin-left: 19px; height: 14px; width: 54px; border: 1px solid #d6cfe2; color: #ccc4da; font-size: 8px; line-height: 12px; text-align: center; letter-spacing: .25px; }
.lock { width: 11px; height: 13px; margin-left: 9px; }
.url { margin-left: 20px; font-size: 14px; letter-spacing: .06px; color: #b3a8cb; white-space: nowrap; }
.url b { color: #fff; font-weight: 500; }
.tools { margin-left: auto; display: flex; align-items: center; gap: 10px; padding-right: 10px; color: #b3a8cb; }
.tools svg { width: 16px; height: 16px; fill: none; stroke: #b3a8cb; stroke-width: 1.100; }
.tools .dots { margin: 0 2px 0 -1px; }
.tools .cart { height: 18px; margin-right: 4px; }
.tools .plane { width: 18px; height: 18px; margin-right: 4px; }
.tools .down { margin: 0 7px 0 5px; }
.bookmarks { flex: none; height: 33px; padding: 4px 0 7px 13px; display: grid; grid-template-columns: 148px 148px 130px 76px 147px 148px 144px 145px 100px; align-items: center; color: #b3a8cb; font-size: 11px; white-space: nowrap; }
.bookmarks div { display: flex; align-items: center; gap: 8px; letter-spacing: -.03px; }
.bookmarks svg { width: 17px; height: 17px; flex: none; }

.page { position: relative; flex: 1; min-height: 0; overflow: hidden; background: #fff; display: flex; align-items: flex-start; padding-left: 388px; color: #333; font-family: Roboto, "Noto Sans", sans-serif; }
.task { width: 722px; padding: 32px 2px 0 0; }
h2 { font-size: 22px; line-height: 32px; letter-spacing: -1.040px; margin-bottom: 30px; }
h3 { font-size: 18px; line-height: 24px; letter-spacing: -.5px; margin-bottom: 20px; }
.example { margin-bottom: 32px; }
.io { display: grid; grid-template-columns: 336px 336px; gap: 48px; }
.field { height: 96px; border: 1px solid #d7d8da; border-radius: 4px; padding: 7px 15px; }
label { display: block; font-size: 12px; line-height: 16px; letter-spacing: .4px; color: #7b7d80; margin-bottom: 1px; }
.field p { font-size: 15px; line-height: 24px; letter-spacing: -.2px; }
.solution { margin: 38px 0 18px; }
.alert { height: 44px; border-left: 4px solid #0d85f5; border-radius: 4px; background: #e0effd; display: flex; align-items: center; gap: 12px; padding-left: 12px; font-size: 13px; letter-spacing: -.05px; }
.alert svg { width: 16px; height: 16px; }
.select { height: 56px; margin-top: 20px; border-radius: 4px; background: #e7eef5; padding: 10px 17px 0 16px; display: flex; justify-content: space-between; }
.select p { font-size: 15px; line-height: 22px; letter-spacing: -.7px; color: #222; }
.select svg { width: 14px; height: 8px; margin-top: 15px; }
.code { width: 722px; height: 180px; margin-top: 20px; border: 1px solid #8a8b8d; border-radius: 4px; padding: 18px 16px; }
.code label { font-size: 13px; color: #333; letter-spacing: .15px; margin-bottom: 20px; }
.code span { display: block; padding-left: 6px; font-size: 12px; line-height: 14px; color: #777; }
.card { width: 282px; margin: 48px 0 0 100px; padding: 24px; border: 1px solid #e3e4e6; border-radius: 8px; }
.timer { font-size: 26px; line-height: 30px; letter-spacing: -.15px; }
.done { margin-top: 2px; font-size: 15px; line-height: 20px; font-weight: 500; letter-spacing: .05px; }
.steps { display: flex; gap: 8px; margin: 20px 0 24px; }
.steps a { width: 32px; height: 32px; background: #f5f6f8; color: #1570e8; font-size: 15px; line-height: 32px; text-align: center; padding-right: 2px; }
.steps .ok { background: #cae1f8; }
.steps .now { background: #ffd540; color: #333; }
button { display: block; width: 232px; height: 56px; border: 0; border-radius: 4px; background: #ffd540; color: #333; font: 15px Roboto, sans-serif; letter-spacing: -.2px; }
.link { display: block; width: max-content; margin-top: 12px; font-size: 15px; line-height: 20px; letter-spacing: -.3px; color: #0f6fe6; }
.first { margin-top: 24px; letter-spacing: -.12px; }
.scroll { position: absolute; right: 4px; top: 326px; width: 4px; height: 277px; border-radius: 2px; background: #bfbfc1; }

.dock { flex: none; position: relative; width: 1816px; height: 73px; margin: 0 0 0 52px; padding-left: 2px; display: flex; border: 1px solid #6f3d4b; border-radius: 20px; background: linear-gradient(90deg, #41101c, #50121f 40%, #561322); box-shadow: 0 0 40px rgba(0, 0, 0, .28); }
.app { position: relative; width: 60.500px; flex: none; height: 64px; display: grid; place-items: center; }
.app svg { width: 46px; height: 46px; }
.big svg { width: 50px; height: 50px; overflow: visible; }
.thumb svg { width: 54px; height: 40px; margin-top: 7px; }
.run::after { content: ""; position: absolute; bottom: -5px; left: 28px; width: 4px; height: 4px; border-radius: 50%; background: #b77e8d; }
.app em { position: absolute; left: 43px; top: 4px; width: 21px; height: 21px; border-radius: 50%; background: #ee2334; color: #fff; font: 11px/21px Inter, sans-serif; text-align: center; }
.sep { width: 1px; height: 54px; margin: 8px 13px 0 14px; background: #7d4452; flex: none; }
.jb { font: 700 15px "Noto Sans", sans-serif; fill: #fff; }
.ij { font-family: "DejaVu Sans Mono", monospace; }
```
